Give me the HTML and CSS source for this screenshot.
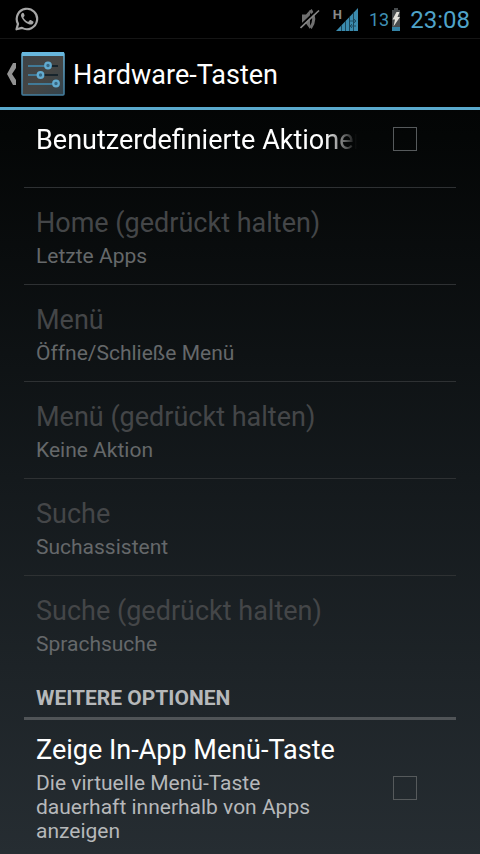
FILE: index.html
```html
<!DOCTYPE html>
<html lang="de">
<head>
<meta charset="utf-8">
<meta name="viewport" content="width=device-width, initial-scale=1">
<title>Hardware-Tasten</title>
<link rel="stylesheet" href="styles.css">
</head>
<body>
<header class="statusbar">
  <svg class="chat-icon" width="24" height="24" viewBox="0 0 24 24" aria-hidden="true">
    <path d="M1.5 22.3 3 16.9A10.2 10.2 0 1 1 7 20.9Z" fill="none" stroke="#a6a6a6" stroke-width="2.2" stroke-linejoin="round"/>
    <path d="M8.7 6.3c-.4-.8-1.200-.8-1.800-.1-1.200 1.300-1.200 3 .1 5.100 1.700 2.900 3.900 4.900 6.900 6 2 .7 4 0 4.500-1.600.3-.9.1-1.200-.5-1.500l-2.200-1.100c-.5-.2-.8-.1-1.200.4l-.8 1c-.3.300-.6.400-1 .2-1.900-.9-3.200-2.100-4.200-3.900-.2-.4-.1-.6.2-.9l.7-.9c.2-.4.200-.6.100-1Z" fill="#a6a6a6"/>
  </svg>
  <div class="status-right">
    <svg class="mute-icon" width="20" height="22" viewBox="0 0 20 22" aria-hidden="true">
      <path d="M2 6.500h4l4-4.500v19L6 15.500H2Z" fill="#6f6f6f"/>
      <path d="M10.500 2q6.500 9 0 18" fill="none" stroke="#6f6f6f" stroke-width="3"/>
      <path d="M0 18 17 2" stroke="#000" stroke-width="2"/>
      <path d="M.5 20 19 2.500" stroke="#858585" stroke-width="1.700"/>
    </svg>
    <div class="signal">
      <span class="network">H</span>
      <svg width="22" height="23" viewBox="0 0 22 23" aria-hidden="true">
        <path d="M0 23 22 0v23Z" fill="#3b8bae"/>
        <path d="M5.500 17v6M9.500 13v10M13.500 9v14M17.500 5v18" stroke="#1a4558" stroke-width="1"/>
        <path d="M14 13h6m-2-2 2 2-2 2M20 18h-6m2-2-2 2 2 2" fill="none" stroke="#1f4d62" stroke-width="1"/>
      </svg>
    </div>
    <span class="percent">13</span>
    <svg class="battery" width="8" height="23" viewBox="0 0 8 23" aria-hidden="true">
      <path d="M2 0h4v2h2v21H0V2h2Z" fill="#474b4d"/>
      <path d="M0 19h8v4H0Z" fill="#3583a5"/>
      <path d="M4.500 4h3L5.500 9h2.500L1.500 18.500l1.500-7H.5Z" fill="#e2e0da"/>
    </svg>
    <time class="clock">23:08</time>
  </div>
</header>

<nav class="actionbar">
  <a class="up" href="#" aria-label="Zurück">
    <svg width="10" height="22" viewBox="0 0 10 22" aria-hidden="true">
      <path d="M9 0v5L5 11l4 6v5H6L0 11 6 0Z" fill="#929292"/>
    </svg>
    <svg width="44" height="44" viewBox="0 0 44 44" aria-hidden="true">
      <defs>
        <linearGradient id="tile" x1="0" y1="0" x2="1" y2="1">
          <stop offset="0" stop-color="#3c4347"/><stop offset=".55" stop-color="#454543"/><stop offset="1" stop-color="#32434d"/>
        </linearGradient>
        <linearGradient id="edge" x1="0" y1="0" x2="0" y2="1">
          <stop offset="0" stop-color="#69b4d8"/><stop offset="1" stop-color="#437d9e"/>
        </linearGradient>
      </defs>
      <rect x="1" y="1" width="42" height="42" rx="1" fill="url(#tile)" stroke="url(#edge)" stroke-width="1.500"/>
      <path d="M1 0h42v4H1Z" fill="#68b7dd"/>
      <path d="M7 14h30M7 23h30M7 32h30" stroke="#17242c" stroke-width="2"/>
      <path d="M7 14h20M7 23h12M7 32h28" stroke="#5096ba" stroke-width="1.500"/>
      <g fill="#386782" stroke="#62abd0" stroke-width="2.200">
        <circle cx="27" cy="13.500" r="2.800"/><circle cx="19.500" cy="23" r="2.800"/><circle cx="35" cy="31.500" r="2.800"/>
      </g>
    </svg>
  </a>
  <h1 class="title">Hardware-Tasten</h1>
</nav>

<main class="list">
  <label class="row scrolled">
    <span class="text"><span class="name fade">Benutzerdefinierte Aktionen</span></span>
    <input class="check" type="checkbox">
  </label>
  <div class="row disabled"><div class="text"><span class="name">Home (gedrückt halten)</span><span class="summary">Letzte Apps</span></div></div>
  <div class="row disabled"><div class="text"><span class="name">Menü</span><span class="summary">Öffne/Schließe Menü</span></div></div>
  <div class="row disabled"><div class="text"><span class="name">Menü (gedrückt halten)</span><span class="summary">Keine Aktion</span></div></div>
  <div class="row disabled"><div class="text"><span class="name">Suche</span><span class="summary">Suchassistent</span></div></div>
  <div class="row disabled last"><div class="text"><span class="name">Suche (gedrückt halten)</span><span class="summary">Sprachsuche</span></div></div>
  <h2 class="section">WEITERE OPTIONEN</h2>
  <label class="row last">
    <span class="text"><span class="name">Zeige In-App Menü-Taste</span><span class="summary">Die virtuelle Menü-Taste dauerhaft innerhalb von Apps anzeigen</span></span>
    <input class="check" type="checkbox">
  </label>
</main>
</body>
</html>
```
FILE: styles.css
```css
* { box-sizing: border-box; }

body {
  margin: 0;
  height: 100vh;
  overflow: hidden;
  display: flex;
  flex-direction: column;
  background: linear-gradient(#000 0, #040606 16%, #14191c 56%, #262d32 100%);
  color: #fff;
  font-family: Roboto, "Liberation Sans", sans-serif;
}

.statusbar {
  flex: none;
  height: 39px;
  display: flex;
  align-items: center;
  justify-content: space-between;
  padding: 0 10px 0 15px;
  background: #000;
  border-bottom: 1px solid #151515;
}

.status-right { display: flex; align-items: center; }
.signal { display: flex; align-items: flex-start; margin: 0 11px 0 13px; }
.network { font-size: 13px; line-height: 13px; font-weight: 700; color: #8a8a8a; }
.signal svg { margin-left: -6px; }
.percent { font-size: 18px; color: #3f90b5; margin-right: 3px; }
.clock { font-size: 24px; line-height: 28px; color: #4fa3c9; margin-left: 10px; padding-top: 1px; }

.actionbar {
  flex: none;
  height: 71px;
  display: flex;
  align-items: center;
  gap: 8px;
  padding: 2px 0 0 7px;
  background: #000;
  border-bottom: 3px solid #5aa9cd;
}

.up { display: flex; align-items: center; gap: 4px; }
.title { margin: 0; padding-top: 2px; font-size: 27px; font-weight: 400; line-height: 32px; }

.list {
  flex: 1;
  min-height: 0;
  overflow: hidden;
  padding: 0 24px;
}

.row {
  display: flex;
  align-items: center;
  min-height: 97px;
  padding: 12px 39px 12px 12px;
  border-bottom: 1px solid #2e3133;
}

/* first entry is partly scrolled under the action bar */
.scrolled { margin-top: -19px; }
.last { min-height: 96px; border-bottom: 0; }

.text {
  flex: 1;
  min-width: 0;
  display: flex;
  flex-direction: column;
  gap: 5px;
  margin-right: 36px;
  padding-top: 2px;
}

.name { font-size: 27px; line-height: 32px; white-space: nowrap; }
.summary { padding-right: 8px; font-size: 21px; line-height: 24px; color: #b6b8ba; }

.fade {
  overflow: hidden;
  -webkit-mask-image: linear-gradient(to left, transparent, #000 32px);
  mask-image: linear-gradient(to left, transparent, #000 32px);
}

.disabled .name { color: #444648; }
.disabled .summary { color: #65686a; }
.disabled .text { margin-right: 0; }

.check {
  appearance: none;
  flex: none;
  width: 24px;
  height: 24px;
  margin: 0;
  border: 1px solid #565a5c;
  background: transparent;
}

.section {
  margin: 0;
  padding: 14px 12px 7px;
  border-bottom: 3px solid #505457;
  color: #b6b8ba;
  font-size: 21px;
  line-height: 24px;
  font-weight: 700;
}
```
